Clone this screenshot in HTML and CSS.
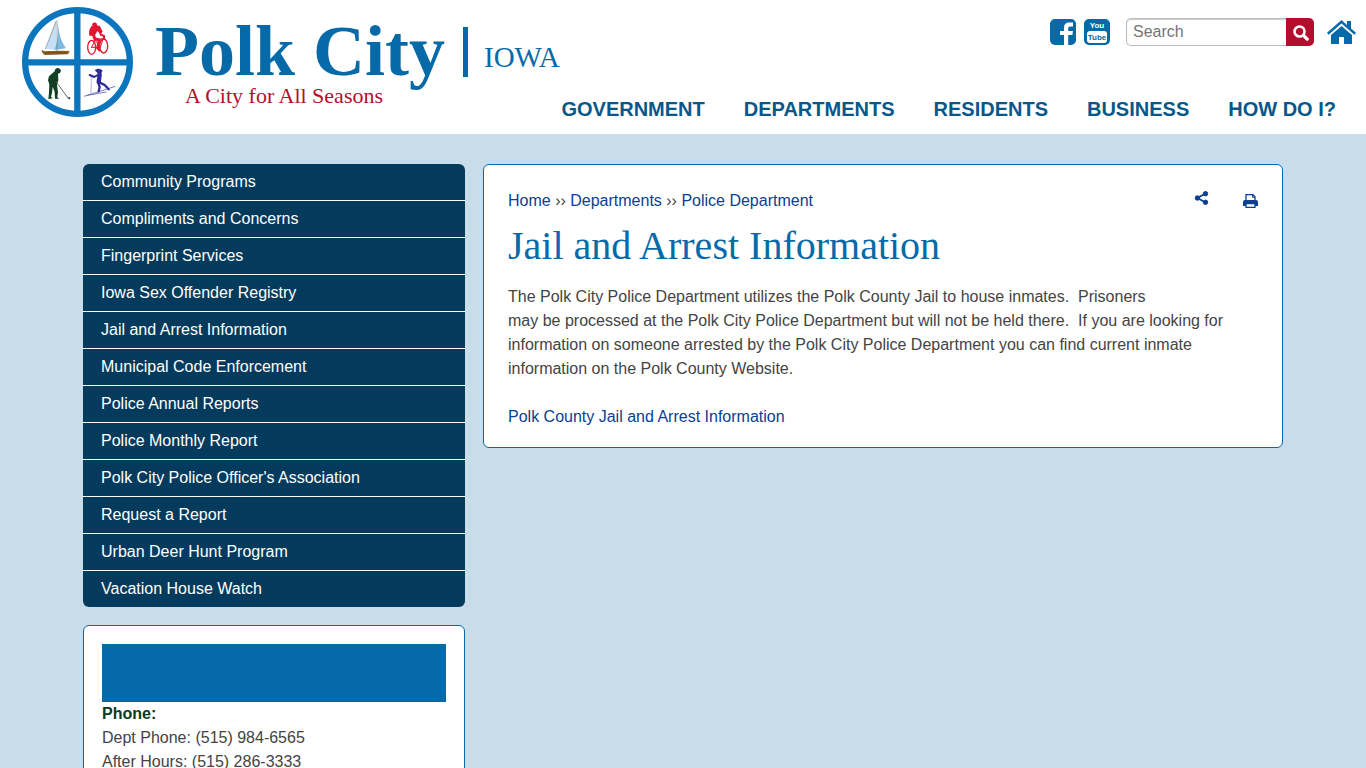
FILE: index.html
```
<!DOCTYPE html>
<html lang="en">
<head>
  <meta charset="UTF-8">
  <meta name="viewport" content="width=device-width, initial-scale=1">
  <title>Jail and Arrest Information</title>
  <link rel="stylesheet" href="styles.css">
</head>
<body>
  <header class="site-header">
    <a class="logo" href="#">
      <svg class="emblem" viewBox="21 21 333 330" aria-hidden="true">
        <ellipse cx="187.500" cy="186" rx="157" ry="155.500" fill="#fff" stroke="#0b76bd" stroke-width="19"/>
        <path d="M187 24v324M24 187h327" stroke="#0b76bd" stroke-width="19"/>
        <!-- sailboat -->
        <path d="M123 62L92 147l31 2z" fill="#c4e0f2"/>
        <path d="M128 64c3 36 10 60 25 81l-35 5c8-18 12-40 10-86z" fill="#7db9e0"/>
        <path d="M126 61v92M123 64L91 147" stroke="#6b8291" stroke-width="2" fill="none"/>
        <path d="M79 150l11 4 44-2 30 1-5 10-69 2-7-5z" fill="#8a5a20"/>
        <path d="M92 158h62" stroke="#5d3b12" stroke-width="2" stroke-dasharray="5 3"/>
        <!-- cyclist -->
        <g fill="none" stroke="#e4152f" stroke-linejoin="round" stroke-linecap="round">
          <ellipse cx="230" cy="142" rx="12" ry="21" stroke-width="4"/>
          <ellipse cx="266" cy="138" rx="12" ry="21" stroke-width="4"/>
          <path d="M230 142l10-22 16 22 8-24M240 120l24-4M230 142h26" stroke-width="3"/>
          <path d="M233 96l6 20 14 4-5 24 6 6" stroke-width="9"/>
          <path d="M254 84l3 20 10 4v8" stroke-width="6"/>
        </g>
        <path d="M230 78l10-4 14 4 9 17-7 7-9-9-7 13-16 2c-4-10-2-22 6-30z" fill="#e4152f"/>
        <path d="M231 74c1-8 13-9 15-2l-2 9h-8z" fill="#e4152f"/>
        <!-- golfer -->
        <path d="M119 214c0-9 9-13 15-8 6 4 3 9 1 13l-6 2 1 20-4 14 3 22-2 14 5 5h-12l-1-20-6-16-2 18-3 13 6 3-14 4 2-20 1-25-4-12 3-12z" fill="#113f24"/>
        <path d="M113 224l3 14 10 9" stroke="#113f24" stroke-width="5" fill="none"/>
        <path d="M123 245l36 49h5" stroke="#5c6d61" stroke-width="3" fill="none"/>
        <circle cx="163" cy="295" r="3" fill="#113f24"/>
        <!-- skier -->
        <path d="M207 289l48-15 46-15M217 286l57-10" stroke="#3a37a0" stroke-width="2" fill="none"/>
        <path d="M229 226l-2 55M231 227l-3 54" stroke="#b9b9e3" stroke-width="2"/>
        <g fill="none" stroke="#2f2b98" stroke-linejoin="round" stroke-linecap="round">
          <path d="M254 224l-3 22" stroke-width="13"/>
          <path d="M250 224l-12 7-14-6" stroke-width="6"/>
          <path d="M250 248l4 14-3 12" stroke-width="7"/>
          <path d="M253 247l16 8 12 13" stroke-width="7"/>
        </g>
        <path d="M239 210l9-4 8 1 7 5-4 8-10 1z" fill="#2f2b98"/>
      </svg>
      <span class="wordmark">
        <span class="city-name">Polk City</span>
        <span class="tagline">A City for All Seasons</span>
      </span>
      <span class="divider"></span>
      <span class="state">IOWA</span>
    </a>

    <div class="header-right">
      <div class="tools">
        <a class="social" href="#" aria-label="Facebook">
          <svg viewBox="0 0 26 26"><rect width="26" height="26" rx="5" fill="#066aa8"/><path d="M14 26V16h-4v-4h4V9c0-4 2-5.500 5.500-5.500H23v4h-2.500c-2 0-2.300.7-2.300 2.200V12H23l-.6 4h-4.200v10z" fill="#fff"/></svg>
        </a>
        <a class="social" href="#" aria-label="YouTube">
          <svg viewBox="0 0 26 26">
            <rect width="26" height="26" rx="5" fill="#066aa8"/>
            <rect x="3" y="12" width="20" height="12" rx="3" fill="#fff"/>
            <text class="tube-text" x="13" y="9" fill="#fff">You</text>
            <text class="tube-text" x="13" y="21" fill="#066aa8">Tube</text>
          </svg>
        </a>
        <form class="search">
          <input type="text" placeholder="Search" aria-label="Search">
          <button type="submit" aria-label="Submit search">
            <svg viewBox="0 0 16 16" fill="none" stroke="#fff"><circle cx="6.500" cy="6.500" r="5" stroke-width="2.600"/><path d="M10.500 10.500l3.700 3.700" stroke-width="3.200" stroke-linecap="round"/></svg>
          </button>
        </form>
        <a class="home" href="#" aria-label="Home">
          <svg viewBox="0 0 29 24" fill="#066aa8"><path d="M14.500 0L20 5V1h4v7.500l5 4.300-1.600 2L14.500 3.600 1.600 14.800 0 12.800z"/><path d="M14.500 6L25 15v9h-8v-7h-5v7H4v-9z"/></svg>
        </a>
      </div>
      <nav class="main-nav">
        <a href="#">GOVERNMENT</a>
        <a href="#">DEPARTMENTS</a>
        <a href="#">RESIDENTS</a>
        <a href="#">BUSINESS</a>
        <a href="#">HOW DO I?</a>
      </nav>
    </div>
  </header>

  <div class="container">
    <aside class="sidebar">
      <nav class="side-nav">
        <a href="#">Community Programs</a>
        <a href="#">Compliments and Concerns</a>
        <a href="#">Fingerprint Services</a>
        <a href="#">Iowa Sex Offender Registry</a>
        <a href="#">Jail and Arrest Information</a>
        <a href="#">Municipal Code Enforcement</a>
        <a href="#">Police Annual Reports</a>
        <a href="#">Police Monthly Report</a>
        <a href="#">Polk City Police Officer's Association</a>
        <a href="#">Request a Report</a>
        <a href="#">Urban Deer Hunt Program</a>
        <a href="#">Vacation House Watch</a>
      </nav>
      <section class="contact">
        <div class="contact-banner"></div>
        <strong>Phone:</strong>
        <div>Dept Phone: (515) 984-6565</div>
        <div>After Hours: (515) 286-3333</div>
      </section>
    </aside>

    <main class="content">
      <div class="content-top">
        <div class="breadcrumb"><a href="#">Home</a> ›› <a href="#">Departments</a> ›› <a href="#">Police Department</a></div>
        <div class="page-tools">
          <a href="#" aria-label="Share">
            <svg viewBox="0 0 14 14" fill="#0b4091" stroke="#0b4091"><path d="M11 2.500L3 7l8 4.500" fill="none" stroke-width="1.800"/><circle cx="11" cy="2.700" r="2.200"/><circle cx="2.900" cy="7" r="2.200"/><circle cx="11" cy="11.300" r="2.200"/></svg>
          </a>
          <button type="button" class="print" aria-label="Print">
            <svg viewBox="0 0 15 14"><path d="M3 7V.7h7L12 2.800V7" fill="#fff" stroke="#0b4091" stroke-width="1.300"/><path d="M9.500.7v2.600H12" fill="none" stroke="#0b4091"/><path d="M0 12V8q0-2 2-2h11q2 0 2 2v4z" fill="#0b4091"/><path d="M3 9.700h9v3.600H3z" fill="#fff" stroke="#0b4091" stroke-width="1.300"/></svg>
          </button>
        </div>
      </div>
      <h1>Jail and Arrest Information</h1>
      <p>The Polk City Police Department utilizes the Polk County Jail to house inmates.&nbsp; Prisoners may&nbsp;be&nbsp;processed at the Polk City Police Department but will not be held there.&nbsp; If you are looking for information on someone arrested by the Polk City Police Department you can find current inmate information on the Polk County Website.</p>
      <p><a href="#">Polk County Jail and Arrest Information</a></p>
    </main>
  </div>
</body>
</html>
```
FILE: styles.css
```
* {
  box-sizing: border-box;
}

body {
  margin: 0;
  font-family: "Liberation Sans", Arial, sans-serif;
  font-size: 16px;
  line-height: 24px;
  color: #444;
  background: #c9dcea;
}

a {
  color: #0b4091;
  text-decoration: none;
}

svg {
  display: block;
}

/* Header */
.site-header {
  display: flex;
  justify-content: space-between;
  min-height: 134px;
  background: #fff;
}

.logo {
  display: flex;
  flex-shrink: 0;
  align-items: flex-start;
  padding: 7px 0 0 22px;
  color: #066aa8;
  font-family: "Liberation Serif", "Times New Roman", serif;
}

.emblem {
  width: 111px;
  height: 110px;
}

.wordmark {
  display: flex;
  flex-direction: column;
  margin: 11px 0 0 22px;
}

.city-name {
  font-size: 72px;
  font-weight: bold;
  line-height: 66px;
}

.tagline {
  padding-left: 30px;
  color: #b50d2d;
  font-size: 22px;
  line-height: 24px;
}

.divider {
  width: 5px;
  height: 50px;
  margin: 20px 16px 0 18px;
  background: #066aa8;
}

.state {
  margin-top: 34px;
  font-size: 29px;
  line-height: 32px;
}

.header-right {
  display: flex;
  flex-direction: column;
  align-items: flex-end;
  padding-top: 18px;
}

.tools {
  display: flex;
  align-items: center;
  padding-right: 10px;
}

.social {
  margin-right: 8px;
}

.social svg {
  width: 26px;
  height: 26px;
}

.tube-text {
  font-family: "Liberation Sans Narrow", "Liberation Sans", sans-serif;
  font-size: 8px;
  font-weight: bold;
  text-anchor: middle;
}

.search {
  display: flex;
  margin: 0 13px 0 8px;
}

.search input {
  width: 160px;
  height: 28px;
  padding: 0 6px;
  border: 1px solid #bbb;
  border-right: 0;
  border-radius: 5px 0 0 5px;
  box-shadow: inset 0 1px 1px #ccc;
  font: inherit;
}

.search input::placeholder {
  color: #757575;
}

.search button {
  width: 28px;
  height: 28px;
  padding: 2px 0 0 7px;
  border: 0;
  border-radius: 0 5px 5px 0;
  background: #b50d2d;
  cursor: pointer;
}

.search button svg {
  width: 16px;
  height: 16px;
}

.home svg {
  width: 29px;
  height: 24px;
}

.main-nav {
  display: flex;
  gap: 39px;
  margin-top: 51px;
  padding-right: 30px;
  white-space: nowrap;
}

.main-nav a {
  color: #06578a;
  font-size: 20px;
  font-weight: bold;
}

/* Page columns */
.container {
  display: grid;
  grid-template-columns: 382px 1fr;
  gap: 18px;
  align-items: start;
  max-width: 1200px;
  margin: 30px auto 0;
}

.side-nav {
  border-radius: 6px;
  background: #043b5c;
  overflow: hidden;
}

.side-nav a {
  display: block;
  padding: 6px 18px;
  color: #fff;
}

.side-nav a + a {
  border-top: 1px solid #fff;
}

.side-nav a:hover {
  background: #066aa8;
}

.contact,
.content {
  border: 1px solid #066aa8;
  border-radius: 6px;
  background: #fff;
}

.contact {
  margin-top: 18px;
  padding: 18px;
}

.contact-banner {
  height: 58px;
  background: #066aa8;
}

.contact strong {
  color: #053c1f;
}

.content {
  padding: 18px 24px;
}

.content-top {
  display: flex;
  justify-content: space-between;
  padding-top: 6px;
}

.page-tools {
  display: flex;
  align-items: flex-start;
  gap: 34px;
}

.page-tools svg {
  width: 15px;
  height: 14px;
}

.print {
  padding: 5px 0 0;
  border: 0;
  background: none;
  cursor: pointer;
}

.page-tools a {
  padding-top: 2px;
}

h1 {
  margin: 9px 0 15px;
  color: #066aa8;
  font-family: Georgia, "Liberation Serif", serif;
  font-size: 40px;
  font-weight: normal;
  line-height: 48px;
}

p {
  margin: 0 0 24px;
}

p:last-child {
  margin-bottom: 0;
}
```
